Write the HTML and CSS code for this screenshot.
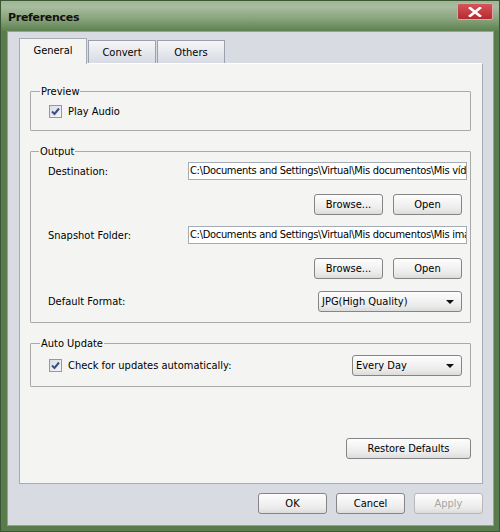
FILE: index.html
```html
<!DOCTYPE html>
<html lang="en">
<head>
  <meta charset="UTF-8"/>
  <title>Preferences</title>
  <link rel="stylesheet" href="styles.css">
</head>
<body>

  <div class="window">
    <div class="titlebar">
      <span class="title">Preferences</span>
      <span class="close-btn">
        <svg width="14" height="10" viewBox="0 0 14 10">
          <path d="M2 1 L12 9 M12 1 L2 9" stroke="#fff" stroke-width="2.6" stroke-linecap="square"/>
        </svg>
      </span>
    </div>

    <div class="client">
      <div class="tabs">
        <span class="tab active">General</span>
        <span class="tab">Convert</span>
        <span class="tab">Others</span>
      </div>

      <div class="panel">
        <fieldset class="group group-preview">
          <legend>Preview</legend>
          <label class="check-row">
            <span class="checkbox"><svg width="9" height="9" viewBox="0 0 9 9"><path d="M1 4.5 L3.5 7 L8 1.5" fill="none" stroke="#3b4f86" stroke-width="2"/></svg></span>
            Play Audio
          </label>
        </fieldset>

        <fieldset class="group group-output">
          <legend>Output</legend>
          <div class="field-row">
            <span class="field-label">Destination:</span>
            <span class="path-input">C:\Documents and Settings\Virtual\Mis documentos\Mis vídeos</span>
          </div>
          <div class="btn-row">
            <span class="btn">Browse...</span>
            <span class="btn">Open</span>
          </div>
          <div class="field-row">
            <span class="field-label">Snapshot Folder:</span>
            <span class="path-input">C:\Documents and Settings\Virtual\Mis documentos\Mis imágenes</span>
          </div>
          <div class="btn-row btn-row-last">
            <span class="btn">Browse...</span>
            <span class="btn">Open</span>
          </div>
          <div class="field-row format-row">
            <span class="field-label">Default Format:</span>
            <span class="combo combo-format">JPG(High Quality)<i class="arrow"></i></span>
          </div>
        </fieldset>

        <fieldset class="group group-update">
          <legend>Auto Update</legend>
          <div class="update-row">
            <label class="check-row">
              <span class="checkbox"><svg width="9" height="9" viewBox="0 0 9 9"><path d="M1 4.5 L3.5 7 L8 1.5" fill="none" stroke="#3b4f86" stroke-width="2"/></svg></span>
              Check for updates automatically:
            </label>
            <span class="combo combo-every">Every Day<i class="arrow"></i></span>
          </div>
        </fieldset>

        <div class="restore-row">
          <span class="btn btn-restore">Restore Defaults</span>
        </div>
      </div>

      <div class="dialog-buttons">
        <span class="btn">OK</span>
        <span class="btn">Cancel</span>
        <span class="btn disabled">Apply</span>
      </div>
    </div>
  </div>

</body>
</html>
```

FILE: styles.css
```css
body {
  margin: 0;
  background: #4f7045;
  font-family: Tahoma, "DejaVu Sans Condensed", sans-serif;
  font-size: 11px;
  color: #000;
}

.window {
  width: 500px;
  height: 532px;
  box-sizing: border-box;
  display: flex;
  flex-direction: column;
  background: #5a7c4d;
  border: 1px solid #3a5633;
}

.titlebar {
  height: 30px;
  display: flex;
  align-items: center;
  justify-content: space-between;
  padding: 0 6px 0 7px;
  background: linear-gradient(#9fb594, #a8bca0 20%, #88a37b 60%, #5d8150);
}

.title {
  font-family: "DejaVu Sans", sans-serif;
  font-weight: bold;
  font-size: 11px;
  letter-spacing: -0.3px;
  color: #111;
  margin-top: 3px;
}

.close-btn {
  align-self: flex-start;
  margin-top: 2px;
  width: 34px;
  height: 15px;
  border: 1px solid #d9a7a4;
  border-radius: 2px;
  background: linear-gradient(#d6545a, #b52a30);
  display: flex;
  align-items: center;
  justify-content: center;
}

.client {
  flex: 1;
  margin: 0 5px 5px 6px;
  background: #d8dbe2;
  border: 1px solid #8fa783;
  padding: 6px 10px 0 11px;
  display: flex;
  flex-direction: column;
}

/* tabs */

.tabs {
  display: flex;
  align-items: flex-end;
  height: 25px;
}

.tab {
  height: 23px;
  width: 68px;
  box-sizing: border-box;
  display: flex;
  align-items: center;
  justify-content: center;
  border: 1px solid #9aa1ad;
  border-bottom: none;
  background: linear-gradient(#f6f6f8, #d8dbe4);
  margin-right: 1px;
}

.tab.active {
  height: 26px;
  background: #f4f4f2;
  border-color: #a6abb4;
  position: relative;
  z-index: 1;
  margin-bottom: -1px;
  padding-bottom: 2px;
}

.panel {
  height: 421px;
  box-sizing: border-box;
  background: #f4f4f2;
  border: 1px solid #a6abb4;
  border-top-color: #fff;
  display: flex;
  flex-direction: column;
  padding: 0 11px 24px 10px;
}

/* group boxes */

.group {
  margin: 0;
  padding: 0 8px 0 17px;
  border: 1px solid #a9a9a9;
  border-radius: 1px;
  min-width: 0;
}

.group legend {
  margin-left: -9px;
  padding: 0 1px;
  line-height: 13px;
}

.group-preview {
  margin-top: 21px;
  padding-top: 7px;
  padding-bottom: 12px;
  padding-left: 18px;
}

.group-output {
  margin-top: 14px;
  padding-top: 4px;
  padding-bottom: 10px;
}

.group-update {
  margin-top: 14px;
  padding-top: 5px;
  padding-bottom: 10px;
  padding-left: 18px;
}

.check-row {
  display: flex;
  align-items: center;
  gap: 6px;
  height: 13px;
}

.checkbox {
  width: 11px;
  height: 11px;
  border: 1px solid #8f98ae;
  background: linear-gradient(135deg, #dcdde6, #f6f6f8);
  display: flex;
  align-items: center;
  justify-content: center;
}

.field-row {
  display: flex;
  align-items: center;
  height: 18px;
}

.field-label {
  width: 140px;
  flex: none;
}

.path-input {
  width: 282px;
  height: 18px;
  box-sizing: border-box;
  margin-right: -5px;
  border: 1px solid #a5acb5;
  background: #fff;
  padding: 0 1px;
  line-height: 16px;
  letter-spacing: -0.3px;
  white-space: nowrap;
  overflow: hidden;
}

.btn-row {
  display: flex;
  justify-content: flex-end;
  gap: 10px;
  margin: 14px 0 11px;
}

.btn-row-last {
  margin-bottom: 12px;
}

.btn {
  width: 69px;
  height: 21px;
  box-sizing: border-box;
  border: 1px solid #858585;
  border-radius: 3px;
  background: linear-gradient(#fdfdfd, #ececec 70%, #dcdcdc);
  display: flex;
  align-items: center;
  justify-content: center;
}

.format-row {
  height: 21px;
}

.combo {
  height: 21px;
  box-sizing: border-box;
  border: 1px solid #858585;
  border-radius: 3px;
  background: linear-gradient(#fdfdfd, #ececec 70%, #dcdcdc);
  display: flex;
  align-items: center;
  justify-content: space-between;
  padding: 0 7px 0 3px;
}

.combo-format {
  width: 147px;
  margin-left: 130px;
}

.combo-every {
  width: 110px;
}

.arrow {
  width: 0;
  height: 0;
  border-left: 4px solid transparent;
  border-right: 4px solid transparent;
  border-top: 4px solid #111;
}

.update-row {
  display: flex;
  align-items: center;
  justify-content: space-between;
  height: 21px;
}

.restore-row {
  margin-top: auto;
  display: flex;
  justify-content: flex-end;
}

.btn-restore {
  width: 125px;
}

.dialog-buttons {
  display: flex;
  justify-content: flex-end;
  gap: 9px;
  margin-top: 9px;
}

.btn.disabled {
  color: #a7a6a0;
  border-color: #b8b8b8;
}
```
